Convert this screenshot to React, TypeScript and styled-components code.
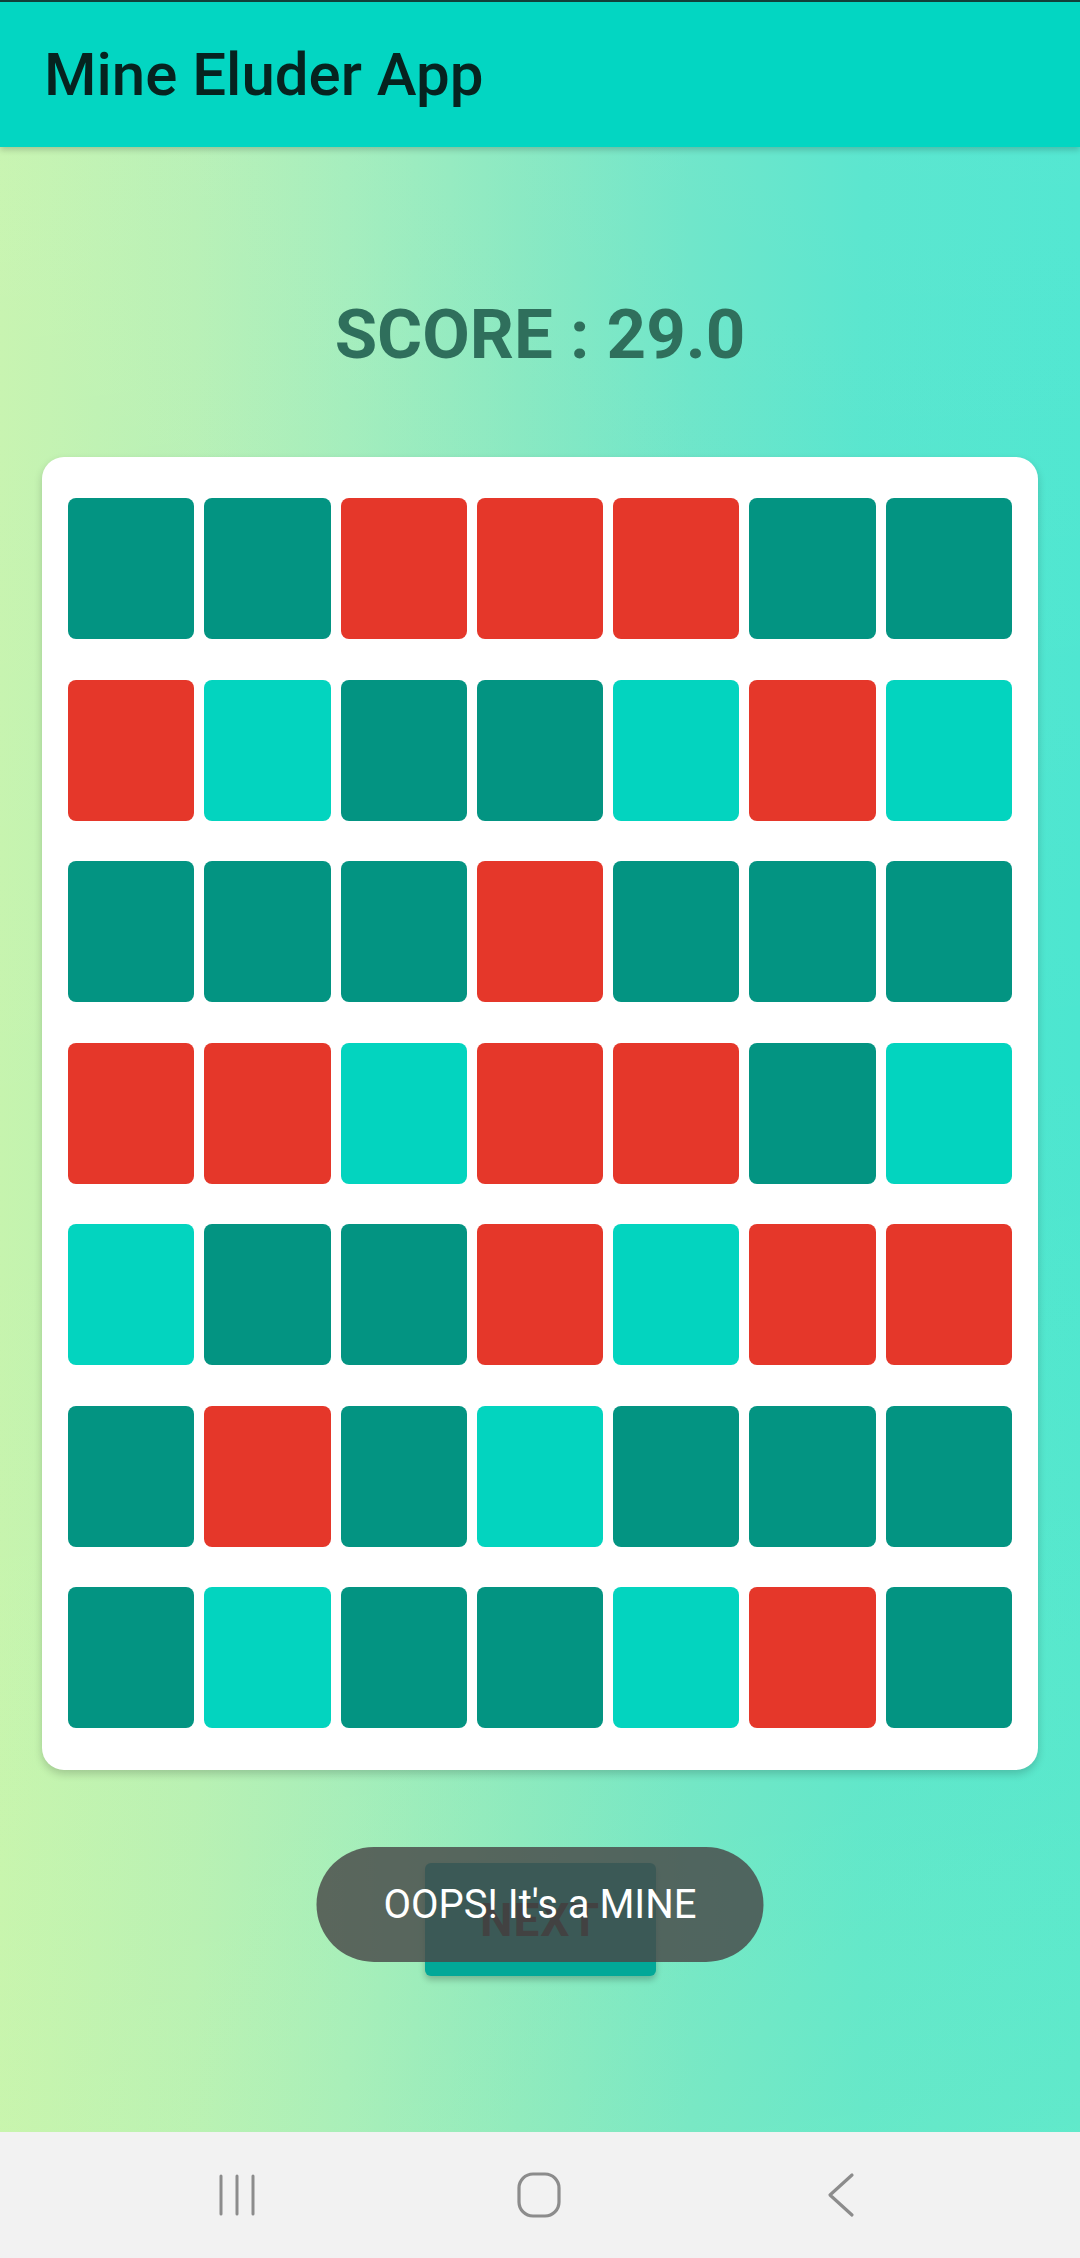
import React from "react";
import styled, { createGlobalStyle } from "styled-components";

const GlobalStyle = createGlobalStyle`
  html, body { margin: 0; padding: 0; }
  body { font-family: Roboto, "Noto Sans", "Liberation Sans", sans-serif; }
  * { box-sizing: border-box; }
`;

const Screen = styled.div`
  width: 1080px;
  height: 2258px;
  display: flex;
  flex-direction: column;
  overflow: hidden;
`;

const AppBar = styled.header`
  position: relative;
  z-index: 2;
  height: 147px;
  flex: none;
  background: #03d6c2;
  border-top: 2px solid #12403a;
  display: flex;
  align-items: center;
  padding: 0 0 0 44px;
  box-shadow: 0 3px 6px rgba(0, 0, 0, 0.18);
`;

const Title = styled.h1`
  margin: 0;
  font-family: Roboto, sans-serif;
  font-weight: 500;
  font-size: 60px;
  line-height: 1;
  color: #06231f;
`;

const Main = styled.main`
  position: relative;
  flex: 1;
  display: flex;
  flex-direction: column;
  align-items: center;
  background:
    linear-gradient(172deg, rgba(255, 255, 255, 0.05) 0%, rgba(255, 255, 255, 0) 50%, rgba(220, 255, 170, 0.14) 100%),
    linear-gradient(90deg, #c6f4ae 0%, #b6f0b4 18%, #a2edbb 32%, #86e8c0 48%, #6ae5c8 64%, #55e5cd 80%, #4ce6d0 100%);
`;

const Score = styled.div`
  margin-top: 154px;
  font-family: Roboto, sans-serif;
  font-weight: 700;
  font-size: 69px;
  line-height: 68px;
  color: #2f6f5c;
`;

const Board = styled.div`
  margin-top: 88px;
  width: 996px;
  background: #ffffff;
  border-radius: 22px;
  padding: 41px 26px 42px;
  display: grid;
  grid-template-columns: repeat(7, 1fr);
  column-gap: 10px;
  row-gap: 40.5px;
  box-shadow: 0 4px 8px rgba(0, 0, 0, 0.18);
`;

const palette = {
  D: "#039482",
  R: "#e5372a",
  C: "#03d4bf",
} as const;

type Kind = keyof typeof palette;

const Cell = styled.div<{ $kind: Kind }>`
  height: 141px;
  border-radius: 8px;
  background: ${(p) => palette[p.$kind]};
`;

const ActionArea = styled.div`
  position: relative;
  margin-top: 93px;
  display: flex;
  justify-content: center;
`;

const NextButton = styled.button`
  width: 231px;
  height: 113px;
  border: none;
  border-radius: 6px;
  background: #02a898;
  color: #2b2b2b;
  font-family: Roboto, sans-serif;
  font-weight: 700;
  font-size: 46px;
  letter-spacing: 1px;
  box-shadow: 0 4px 6px rgba(0, 0, 0, 0.22);
`;

const Toast = styled.div`
  position: absolute;
  top: -16px;
  left: 50%;
  transform: translateX(-50%);
  width: 447px;
  height: 115px;
  border-radius: 58px;
  background: rgba(72, 72, 72, 0.82);
  color: #ffffff;
  font-family: Roboto, sans-serif;
  font-weight: 400;
  font-size: 40px;
  display: flex;
  align-items: center;
  justify-content: center;
  white-space: nowrap;
`;

const NavBar = styled.nav`
  height: 126px;
  flex: none;
  background: #f2f2f2;
  display: grid;
  grid-template-columns: repeat(3, 302px);
  align-items: center;
  justify-items: center;
  padding: 0 0 0 86px;
`;

const NavIcon = styled.svg`
  display: block;
  color: #8c8c8c;
`;

const rows: string[] = [
  "DDRRRDD",
  "RCDDCRC",
  "DDDRDDD",
  "RRCRRDC",
  "CDDRCRR",
  "DRDCDDD",
  "DCDDCRD",
];

export default function App() {
  return (
    <Screen>
      <GlobalStyle />
      <AppBar>
        <Title>Mine Eluder App</Title>
      </AppBar>
      <Main>
        <Score>SCORE : 29.0</Score>
        <Board>
          {rows.flatMap((row, r) =>
            row.split("").map((k, c) => <Cell key={`${r}-${c}`} $kind={k as Kind} />)
          )}
        </Board>
        <ActionArea>
          <NextButton>NEXT</NextButton>
          <Toast>OOPS! It's a MINE</Toast>
        </ActionArea>
      </Main>
      <NavBar>
        <NavIcon width="40" height="44" viewBox="0 0 40 44" fill="none">
          <g stroke="currentColor" strokeWidth="3" strokeLinecap="round">
            <line x1="4" y1="3" x2="4" y2="41" />
            <line x1="20" y1="3" x2="20" y2="41" />
            <line x1="36" y1="3" x2="36" y2="41" />
          </g>
        </NavIcon>
        <NavIcon width="46" height="48" viewBox="0 0 46 48" fill="none">
          <rect x="3" y="3" width="40" height="42" rx="14" stroke="currentColor" strokeWidth="3.2" />
        </NavIcon>
        <NavIcon width="30" height="46" viewBox="0 0 30 46" fill="none">
          <polyline points="26,3 4,23 26,43" stroke="currentColor" strokeWidth="3.2" strokeLinecap="round" strokeLinejoin="round" />
        </NavIcon>
      </NavBar>
    </Screen>
  );
}
